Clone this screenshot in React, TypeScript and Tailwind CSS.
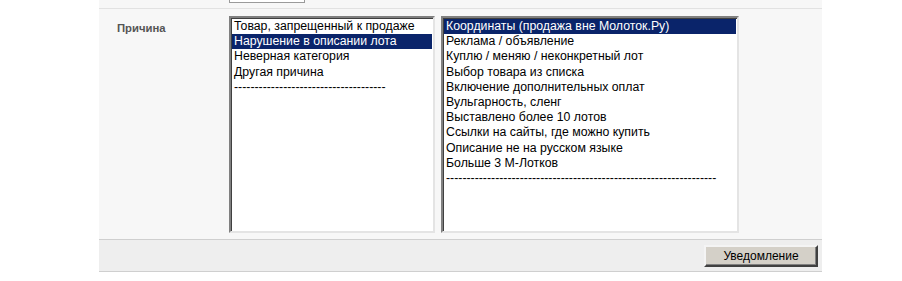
import React from "react";

const leftItems = [
  "Товар, запрещенный к продаже",
  "Нарушение в описании лота",
  "Неверная категория",
  "Другая причина",
  "-------------------------------------",
];

const rightItems = [
  "Координаты (продажа вне Молоток.Ру)",
  "Реклама / объявление",
  "Куплю / меняю / неконкретный лот",
  "Выбор товара из списка",
  "Включение дополнительных оплат",
  "Вульгарность, сленг",
  "Выставлено более 10 лотов",
  "Ссылки на сайты, где можно купить",
  "Описание не на русском языке",
  "Больше 3 М-Лотков",
  "------------------------------------------------------------------",
];

type ListProps = {
  items: string[];
  selected: number;
  className: string;
};

const ListBox = ({ items, selected, className }: ListProps) => (
  <div
    className={`${className} h-[217px] bg-white border-2 border-t-[#808080] border-l-[#808080] border-r-[#e4e4e4] border-b-[#e4e4e4] shadow-[inset_1px_1px_0_#404040] pt-[1px] pl-[1px] pr-[1px]`}
  >
    {items.map((item, i) => (
      <div
        key={i}
        className={`h-[15.2px] leading-[15.2px] pl-[2px] text-[12.3px] whitespace-nowrap overflow-hidden ${
          i === selected ? "bg-[#0a246a] text-white" : "text-black"
        }`}
      >
        {item}
      </div>
    ))}
  </div>
);

export default function App() {
  return (
    <div className="w-[902px] h-[281px] bg-white font-['Liberation_Sans',Arial,sans-serif]">
      <div className="ml-[99px] w-[723px]">
        {/* previous row, cut off at the top */}
        <div className="h-[9px] bg-[#f7f7f7] border-b border-[#e2e2e2] overflow-hidden">
          <div className="ml-[130px] w-[76px] h-[3px] bg-white border-x border-b border-[#9a9a9a]"></div>
        </div>

        {/* reason row */}
        <div className="flex bg-[#f7f7f7] pt-[7px] pb-[6px]">
          <div className="w-[130px] pl-[18px] pt-[4px] text-[11.3px] font-bold text-[#555]">
            Причина
          </div>
          <ListBox items={leftItems} selected={1} className="w-[206px]" />
          <ListBox items={rightItems} selected={0} className="w-[298px] ml-[6px]" />
        </div>

        {/* footer */}
        <div className="h-[33px] bg-[#eeeeee] border-y border-[#cfcfcf] flex items-center justify-end pr-[4px]">
          <button className="w-[114px] h-[22px] bg-[#d4d0c8] text-[12px] text-black border-2 border-t-[#f4f4f4] border-l-[#f4f4f4] border-r-[#404040] border-b-[#404040] shadow-[inset_-1px_-1px_0_#808080]">
            Уведомление
          </button>
        </div>
      </div>
    </div>
  );
}
